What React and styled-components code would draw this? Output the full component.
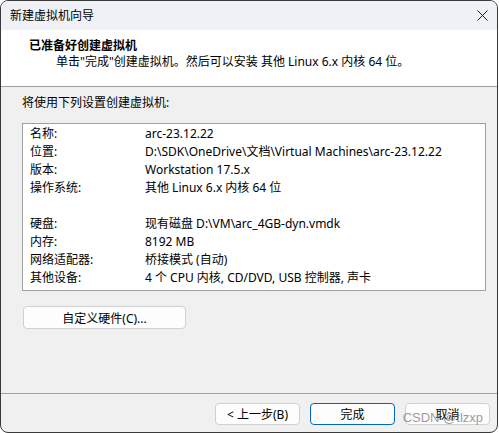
import styled, { createGlobalStyle } from "styled-components";

const GlobalStyle = createGlobalStyle`
  html, body {
    margin: 0;
    padding: 0;
    background: #ffffff;
  }
  body {
    font-family: "Noto Sans", "Noto Sans CJK SC", sans-serif;
    font-size: 12px;
    color: #000;
  }
`;

const Window = styled.div`
  position: relative;
  width: 498px;
  height: 433px;
  box-sizing: border-box;
  border: 1px solid #3a3a3a;
  border-radius: 8px;
  overflow: hidden;
  display: flex;
  flex-direction: column;
  background: #f0f0f0;
`;

const TitleBar = styled.div`
  height: 29px;
  flex-shrink: 0;
  display: flex;
  align-items: center;
  justify-content: space-between;
  padding: 0 8px 0 9px;
  background: #eff1f6;
  font-size: 12px;
  line-height: 16px;
`;

const CloseButton = styled.div`
  width: 12px;
  height: 12px;
  display: flex;
  align-items: center;
  justify-content: center;
  margin-right: 1px;
`;

const Header = styled.div`
  height: 48px;
  flex-shrink: 0;
  padding: 8px 0 0 28px;
  background: #ffffff;
  border-bottom: 1px solid #a0a0a0;
  line-height: 16px;
`;

const Heading = styled.div`
  font-weight: 700;
`;

const SubText = styled.div`
  margin-left: 27px;
`;

const Body = styled.div`
  flex: 1;
  padding: 8px 11px 0 21px;
  display: flex;
  flex-direction: column;
  line-height: 16px;
`;

const Intro = styled.div`
  margin-bottom: 12px;
`;

const SummaryBox = styled.div`
  width: 464px;
  box-sizing: border-box;
  border: 1px solid #a0a0a0;
  background: #ffffff;
  padding: 1px 7px 3px 7px;
`;

const Row = styled.div`
  display: grid;
  grid-template-columns: 115px 1fr;
  height: 18px;
  line-height: 18px;
  white-space: nowrap;
`;

const Button = styled.button`
  box-sizing: border-box;
  height: 22px;
  padding: 0;
  font-family: inherit;
  font-size: 12px;
  color: #000;
  background: #fdfdfd;
  border: 1px solid ${(p) => (p.primary ? "#0067c0" : "#d0d0d0")};
  border-radius: 4px;
  width: ${(p) => p.width || 85}px;
`;

const CustomizeButton = styled(Button)`
  margin: 15px 0 0 1px;
  height: 23px;
`;

const Footer = styled.div`
  height: 39px;
  flex-shrink: 0;
  border-top: 1px solid #a0a0a0;
  display: flex;
  justify-content: flex-end;
  gap: 10px;
  padding: 9px 7px 0 0;
  box-sizing: border-box;
`;

const Watermark = styled.div`
  position: absolute;
  right: 14px;
  bottom: 7px;
  font-family: "Liberation Sans", "Noto Sans", sans-serif;
  font-size: 13px;
  color: rgba(120, 120, 120, 0.75);
  pointer-events: none;
`;

const rows = [
  ["名称:", "arc-23.12.22"],
  ["位置:", "D:\\SDK\\OneDrive\\文档\\Virtual Machines\\arc-23.12.22"],
  ["版本:", "Workstation 17.5.x"],
  ["操作系统:", "其他 Linux 6.x 内核 64 位"],
  ["", ""],
  ["硬盘:", "现有磁盘 D:\\VM\\arc_4GB-dyn.vmdk"],
  ["内存:", "8192 MB"],
  ["网络适配器:", "桥接模式 (自动)"],
  ["其他设备:", "4 个 CPU 内核, CD/DVD, USB 控制器, 声卡"],
];

export default function App() {
  return (
    <>
      <GlobalStyle />
      <Window>
        <TitleBar>
          <span>新建虚拟机向导</span>
          <CloseButton>
            <svg width="11" height="11" viewBox="0 0 11 11">
              <path d="M0.5 0.5 L10.5 10.5 M10.5 0.5 L0.5 10.5" stroke="#1a1a1a" strokeWidth="1" fill="none" />
            </svg>
          </CloseButton>
        </TitleBar>
        <Header>
          <Heading>已准备好创建虚拟机</Heading>
          <SubText>单击"完成"创建虚拟机。然后可以安装 其他 Linux 6.x 内核 64 位。</SubText>
        </Header>
        <Body>
          <Intro>将使用下列设置创建虚拟机:</Intro>
          <SummaryBox>
            {rows.map(([label, value], i) => (
              <Row key={i}>
                <span>{label}</span>
                <span>{value}</span>
              </Row>
            ))}
          </SummaryBox>
          <div>
            <CustomizeButton width={163}>自定义硬件(C)...</CustomizeButton>
          </div>
        </Body>
        <Footer>
          <Button>&lt; 上一步(B)</Button>
          <Button primary>完成</Button>
          <Button>取消</Button>
        </Footer>
        <Watermark>CSDN @tlzxp</Watermark>
      </Window>
    </>
  );
}
